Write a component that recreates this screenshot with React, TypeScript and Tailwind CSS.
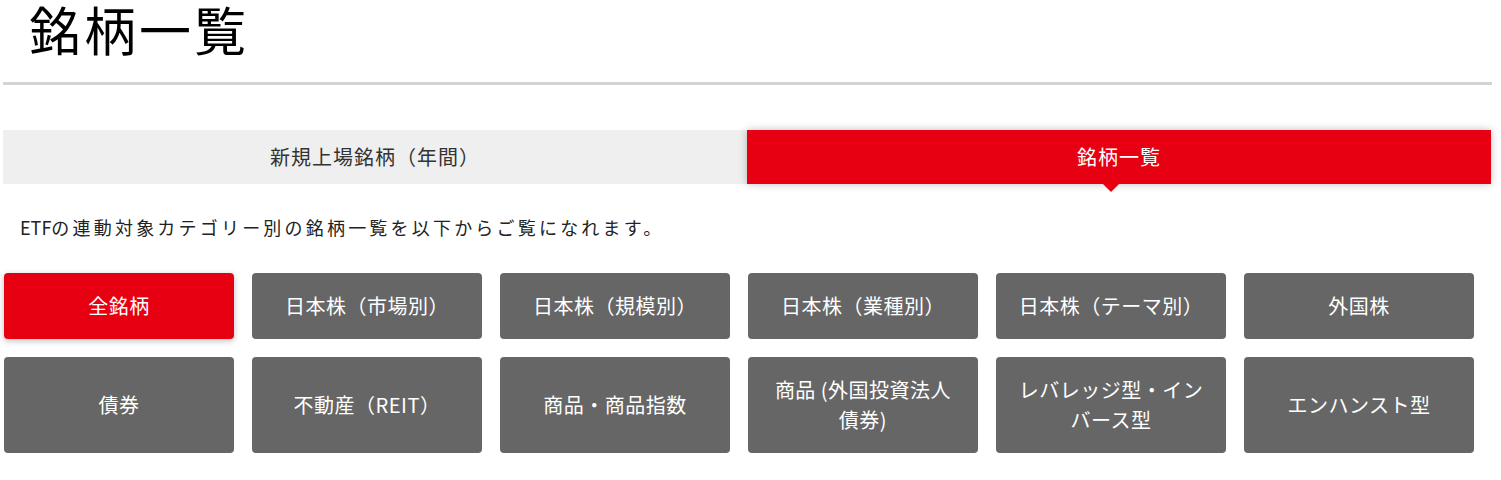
import React from "react";

const firstRow = [
  { label: "全銘柄", active: true },
  { label: "日本株（市場別）" },
  { label: "日本株（規模別）" },
  { label: "日本株（業種別）" },
  { label: "日本株（テーマ別）" },
  { label: "外国株" },
];

const secondRow = [
  { label: "債券" },
  { label: "不動産（REIT）" },
  { label: "商品・商品指数" },
  { label: "商品 (外国投資法人債券)" },
  { label: "レバレッジ型・インバース型" },
  { label: "エンハンスト型" },
];

function CategoryButton({ label, active, tall }: { label: string; active?: boolean; tall?: boolean }) {
  return (
    <a
      href="#"
      className={
        "flex w-[230px] items-center justify-center rounded-[4px] px-5 text-center text-[20px] leading-[30px] tracking-[0.5px] text-white " +
        (tall ? "h-[96px] " : "h-[66px] ") +
        (active ? "bg-[#e60012] shadow-[0_2px_6px_rgba(0,0,0,0.25)]" : "bg-[#666666]")
      }
    >
      {label}
    </a>
  );
}

export default function App() {
  return (
    <div className="h-[480px] w-[1501px] overflow-hidden bg-white font-['Noto_Sans_CJK_JP',sans-serif] text-[#333]">
      <div className="ml-[3px] w-[1489px]">
        {/* ------------------- Header ------------------- */}
        <div className="border-b-[3px] border-[#d3d3d3] pb-[24px]">
          <h1 className="pl-[26px] text-[52px] leading-[58px] font-normal tracking-[3px] text-black">銘柄一覧</h1>
        </div>

        {/* ------------------- Tabs ------------------- */}
        <div className="mt-[45px] flex w-[1488px]">
          <a href="#" className="flex h-[54px] w-[744px] items-center justify-center bg-[#efefef] text-[20px] tracking-[1px] text-[#333]">
            新規上場銘柄（年間）
          </a>
          <a
            href="#"
            className="relative flex h-[54px] w-[744px] items-center justify-center bg-[#e60012] text-[20px] tracking-[1px] text-white shadow-[0_0_8px_rgba(0,0,0,0.25)]"
          >
            銘柄一覧
            <span className="absolute left-[356px] top-full h-0 w-0 border-x-[8px] border-t-[8px] border-x-transparent border-t-[#e60012]" />
          </a>
        </div>

        {/* ------------------- Lead ------------------- */}
        <p className="mt-[33px] pl-[17px] text-[18px] leading-[20px] tracking-[3.2px] text-[#222]">
          <span className="tracking-normal">ETF</span>の連動対象カテゴリー別の銘柄一覧を以下からご覧になれます。
        </p>

        {/* ------------------- Categories ------------------- */}
        <div className="ml-[1px] mt-[36px] flex flex-col gap-[18px]">
          <div className="flex gap-[18px]">
            {firstRow.map((b) => (
              <CategoryButton key={b.label} label={b.label} active={b.active} />
            ))}
          </div>
          <div className="flex gap-[18px]">
            {secondRow.map((b) => (
              <CategoryButton key={b.label} label={b.label} tall />
            ))}
          </div>
        </div>
      </div>
    </div>
  );
}
